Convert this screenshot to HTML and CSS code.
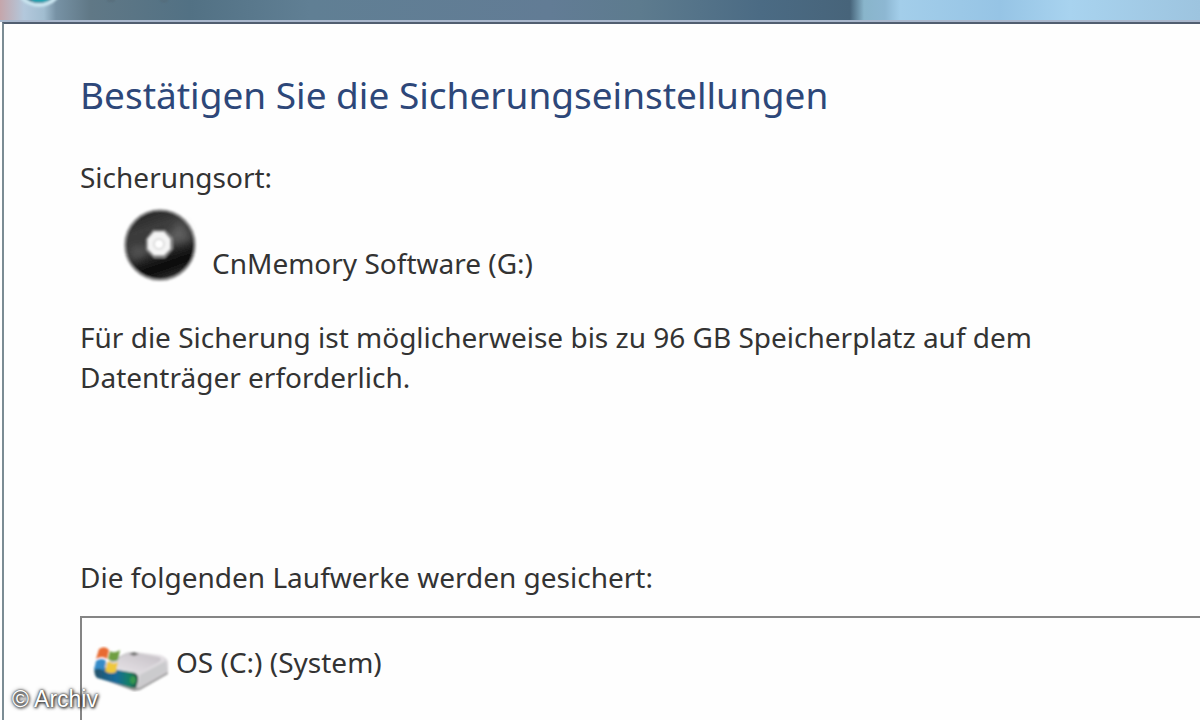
FILE: index.html
```html
<!DOCTYPE html>
<html lang="de">
<head>
<meta charset="utf-8">
<title>Sicherung</title>
<link rel="stylesheet" href="styles.css">
</head>
<body>
<div class="window">
  <header class="titlebar">
    <svg class="orb" width="200" height="22" viewBox="0 0 200 22" aria-hidden="true">
      <defs><filter id="soft"><feGaussianBlur stdDeviation="1"/></filter></defs>
      <g filter="url(#soft)">
        <circle cx="39" cy="-18" r="25" fill="#c9e4ef"/>
        <circle cx="39" cy="-18" r="21" fill="#12667f"/>
        <ellipse cx="40" cy="0" rx="9" ry="2" fill="#23a6b4"/>
        <path d="M107 0q4 2 8 0M160 0q4 3 8 0" stroke="#50636f" stroke-width="1" fill="none"/>
      </g>
    </svg>
  </header>
  <main class="page">
    <h1 class="title">Bestätigen Sie die Sicherungseinstellungen</h1>
    <p class="text">Sicherungsort:</p>
    <div class="location">
      <svg class="disc" width="76" height="76" viewBox="0 0 76 76" aria-hidden="true">
        <defs>
          <linearGradient id="disc" x1="0.3" y1="0" x2="0.65" y2="1">
            <stop offset="0" stop-color="#252525"/><stop offset="0.25" stop-color="#3c3c3c"/>
            <stop offset="0.55" stop-color="#353535"/><stop offset="0.8" stop-color="#080808"/><stop offset="1" stop-color="#333"/>
          </linearGradient>
          <filter id="edge"><feGaussianBlur stdDeviation="0.9"/></filter>
          <filter id="sheen"><feGaussianBlur stdDeviation="4"/></filter>
        </defs>
        <g filter="url(#edge)">
          <circle cx="38" cy="38" r="35" fill="url(#disc)" stroke="#999" stroke-width="2"/>
          <g filter="url(#sheen)">
            <path d="M38 38 58 14A31 31 0 0 1 68 34Z" fill="#888" opacity=".5"/>
            <path d="M38 38 12 54A31 31 0 0 1 8 40Z" fill="#888" opacity=".4"/>
          </g>
          <path d="M31 23H43L51 31V42L43 51H32L24 43V32Z" fill="#888"/>
          <path d="M32 25H42L48 32V42L42 48H32L26 42V32Z" fill="#f4f4f4"/>
          <circle cx="37" cy="37" r="5" fill="#fff" stroke="#ddd" stroke-width="2"/>
        </g>
      </svg>
      <span class="location-name">CnMemory Software (G:)</span>
    </div>
    <p class="text note">Für die Sicherung ist möglicherweise bis zu 96 GB Speicherplatz auf dem Datenträger erforderlich.</p>
    <p class="text">Die folgenden Laufwerke werden gesichert:</p>
    <ul class="drives">
      <li class="drive">
        <svg class="drive-icon" width="78" height="46" viewBox="0 0 78 46" aria-hidden="true">
          <defs>
            <linearGradient id="top" x1="0" y1="0" x2="1" y2="1"><stop offset="0" stop-color="#aaa"/><stop offset="0.5" stop-color="#e8e4e8"/><stop offset="1" stop-color="#b4b4b6"/></linearGradient>
            <linearGradient id="front"><stop offset="0" stop-color="#24526a"/><stop offset="0.5" stop-color="#176b9b"/><stop offset="0.8" stop-color="#168064"/><stop offset="1" stop-color="#204d42"/></linearGradient>
            <linearGradient id="lid" x1="0" y1="1" x2="1" y2="0"><stop offset="0" stop-color="#eeeaee"/><stop offset="1" stop-color="#c4bfc5"/></linearGradient>
            <filter id="hdd"><feGaussianBlur stdDeviation="0.9"/></filter>
          </defs>
          <g filter="url(#hdd)">
            <path d="M5 31 42 45 48 44 76 28 75 23 44 38Z" fill="#999"/>
            <path d="M3 23 32 8Q35 6 41 6L69 9Q76 12 76 17V26L48 42 42 42 45 28Z" fill="url(#top)"/>
            <path d="M9 23 33 9Q36 7 40 7L67 11Q71 13 67 16L45 28Z" fill="url(#lid)"/>
            <path d="M48 29 74 15V24L48 38Z" fill="#cbcbcd"/>
            <path d="M37 8 42 6 47 8 42 10Z" fill="#777"/>
            <path d="M3 20 43 27Q47 29 46 35L44 42 40 42 5 32Q1 28 3 20Z" fill="url(#front)"/>
            <ellipse cx="41" cy="34" rx="3" ry="4" fill="#349650"/>
            <path d="M7 3Q13-1 17 4L15 13Q10 9 4 13Z" fill="#e86a32"/>
            <path d="M18 5Q22 8 28 4L26 14Q21 17 16 13Z" fill="#6f9f43"/>
            <path d="M4 15Q10 11 14 15L12 25Q8 21 2 24Z" fill="#368bc8"/>
            <path d="M16 15Q21 19 26 16L24 26Q18 29 13 25Z" fill="#efc83c"/>
          </g>
        </svg>
        <span class="drive-name">OS (C:) (System)</span>
      </li>
    </ul>
  </main>
  <div class="credit">© Archiv</div>
</div>
</body>
</html>
```
FILE: styles.css
```css
* { box-sizing: border-box; }
body {
  margin: 0;
  font-family: "Noto Sans", "Open Sans", sans-serif;
  font-size: 28px;
  line-height: 40px;
  color: #333;
}
.window {
  position: relative;
  display: flex;
  flex-direction: column;
  height: 100vh;
  overflow: hidden;
  background: #fefefe;
}
.titlebar {
  flex: none;
  height: 22px;
  border-bottom: 2px solid #a9b7cc;
  background:
    radial-gradient(ellipse at 1104px 10px, #759bb8 0, transparent 12px),
    radial-gradient(ellipse at 888px 12px, #84acc8 0, transparent 14px),
    linear-gradient(90deg, #c5a6ab 0, #b3c8dc 24px, #a1bdd0 44px, #7792a5 56px, #607886 90px, #527184 190px, #607f94 310px, #627c95 550px, #5d7b8e 640px, #4b6b84 760px, #47647a 850px, #89b5cb 864px, #8db7d2 885px, #a3ceea 900px, #96c4e5 1000px, #a8d3ef 1070px, #9dc4df 1200px);
}
.orb { display: block; }
.page {
  display: flex;
  flex: 1;
  flex-direction: column;
  min-height: 0;
  margin-left: 2px;
  padding: 48px 0 0 76px;
  border-top: 2px solid #515e70;
  border-left: 2px solid #7b8c94;
}
.title {
  margin: 0 0 39px;
  font-size: 37px;
  font-weight: 400;
  line-height: 46px;
  color: #2d4779;
}
.text { margin: 0; }
.location {
  display: flex;
  align-items: center;
  gap: 14px;
  padding-left: 42px;
  margin-top: 10px;
}
.location-name { padding-top: 36px; }
.note { max-width: 980px; margin: 34px 0 160px; }
.drives {
  flex: 1;
  margin: 19px 0 0;
  padding: 24px 10px;
  border: 2px solid #858585;
  border-width: 2px 0 0 2px;
  list-style: none;
}
.drive { display: flex; align-items: flex-start; gap: 6px; }
.drive-icon { flex: none; margin-top: 4px; }
.credit {
  position: absolute;
  bottom: 7px;
  left: 12px;
  font-family: "Liberation Sans", sans-serif;
  font-size: 23px;
  line-height: 28px;
  color: #fff;
  text-shadow: 0 0 2px #333, 1px 1px 3px #222, 0 0 4px #555;
}
```
